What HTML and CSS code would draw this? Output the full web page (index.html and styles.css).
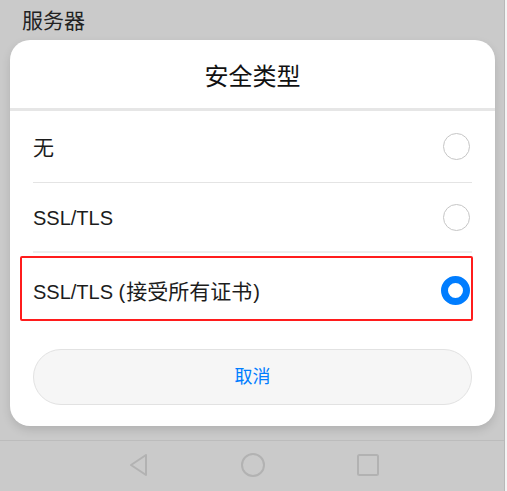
FILE: index.html
```html
<!DOCTYPE html>
<html lang="zh">
<head>
<meta charset="utf-8">
<link rel="stylesheet" href="styles.css">
</head>
<body>
<div class="screen">
  <div class="phone">
    <div class="header">服务器</div>
    <div class="dialog">
      <div class="title">安全类型</div>
      <div class="list">
        <div class="item first">
          <span class="label">无</span>
          <span class="radio"></span>
        </div>
        <div class="item second">
          <span class="label">SSL/TLS</span>
          <span class="radio"></span>
        </div>
        <div class="item third marked">
          <span class="label">SSL/TLS (<span class="cjk">接受所有证书</span>)</span>
          <span class="radio checked"></span>
        </div>
      </div>
      <div class="actions">
        <button class="cancel">取消</button>
      </div>
    </div>
    <div class="spacer"></div>
    <div class="navbar">
      <svg class="nav-icon" width="22" height="24" viewBox="0 0 22 24">
        <path d="M18 2 L3 12 L18 22 Z" fill="none" stroke="#b2b2b2" stroke-width="2" stroke-linejoin="round"/>
      </svg>
      <svg class="nav-icon" width="26" height="26" viewBox="0 0 26 26">
        <circle cx="13" cy="13" r="11" fill="none" stroke="#b2b2b2" stroke-width="2"/>
      </svg>
      <svg class="nav-icon" width="24" height="24" viewBox="0 0 24 24">
        <rect x="2" y="2" width="20" height="20" rx="1.5" fill="none" stroke="#b2b2b2" stroke-width="2"/>
      </svg>
    </div>
  </div>
  <div class="edge"></div>
</div>
</body>
</html>
```

FILE: styles.css
```css
html, body {
  margin: 0;
  padding: 0;
}

body {
  background: #cacaca;
  font-family: "Liberation Sans", "Noto Sans CJK SC", sans-serif;
  color: #1c1c1c;
}

.screen {
  display: flex;
  width: 507px;
  height: 491px;
  overflow: hidden;
}

.phone {
  width: 504px;
  display: flex;
  flex-direction: column;
  background: #cacaca;
}

.edge {
  width: 2px;
  background: #f4f4f4;
  border-left: 1px solid #b8b8b8;
}

.header {
  height: 40px;
  padding-left: 22px;
  font-family: "Noto Sans CJK SC", sans-serif;
  font-size: 21px;
  line-height: 38px;
  color: #222;
}

.dialog {
  margin: 0 9px 0 10px;
  height: 386px;
  background: #fff;
  border-radius: 20px;
  box-shadow: 0 4px 10px rgba(0, 0, 0, 0.12);
  display: flex;
  flex-direction: column;
}

.title {
  height: 68px;
  line-height: 70px;
  text-align: center;
  font-family: "Noto Sans CJK SC", sans-serif;
  font-size: 24px;
  color: #111;
  border-bottom: 3px solid #e6e6e6;
}

.list {
  padding: 0 23px;
  display: flex;
  flex-direction: column;
}

.item {
  display: flex;
  align-items: center;
  justify-content: space-between;
  font-size: 20px;
}

.item.first {
  height: 71px;
  border-bottom: 1px solid #e4e4e4;
}

.item.second {
  height: 68px;
  border-bottom: 2px solid #eeeeee;
}

.item.third {
  height: 74px;
  padding-bottom: 2px;
}

.label {
  color: #1c1c1c;
}

.first .label {
  font-family: "Noto Sans CJK SC", sans-serif;
  font-size: 21px;
  padding-bottom: 2px;
}

.second .label {
  padding-top: 3px;
}

.cjk {
  font-family: "Noto Sans CJK SC", sans-serif;
  font-size: 21px;
  margin: 0 1px;
}

.marked {
  position: relative;
}

.marked::after {
  content: "";
  position: absolute;
  left: -13px;
  right: -1px;
  top: 3px;
  bottom: 8px;
  border: 2px solid #ff1c1c;
  border-radius: 2px;
  pointer-events: none;
}

.radio {
  width: 25px;
  height: 25px;
  border: 1.5px solid #c6c6c6;
  border-radius: 50%;
  margin-right: 2px;
}

.radio.checked {
  width: 15px;
  height: 15px;
  border: 7px solid #007dff;
  background: #fff;
}

.actions {
  padding: 20px 23px 0;
}

.cancel {
  width: 100%;
  height: 56px;
  border: 1px solid #e2e2e2;
  border-radius: 28px;
  background: #f6f6f6;
  font-family: "Noto Sans CJK SC", sans-serif;
  font-size: 18px;
  color: #007dff;
  padding: 0 0 4px;
}

.spacer {
  height: 14px;
}

.navbar {
  flex: 1;
  border-top: 1px solid #bcbcbc;
  display: flex;
  align-items: center;
  justify-content: center;
  gap: 90px;
  padding-left: 4px;
  padding-bottom: 2px;
}
```
